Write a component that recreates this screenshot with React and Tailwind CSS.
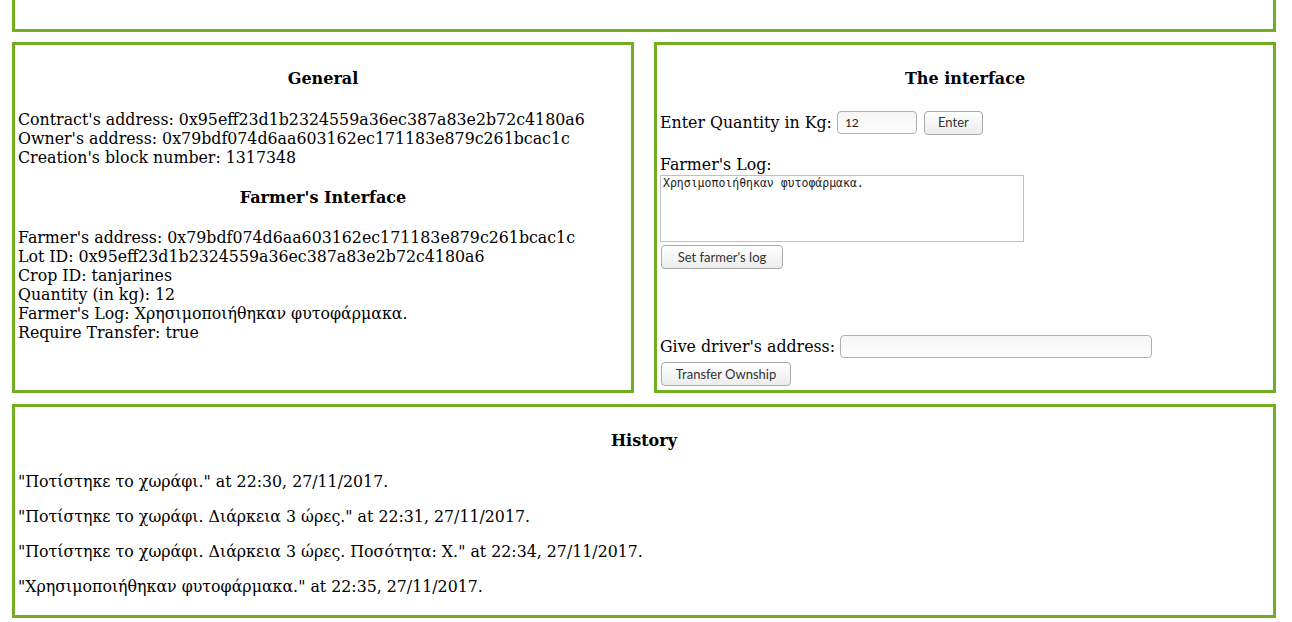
export default function App() {
  const box = "border-[3px] border-[#73ad21] p-[3px]";
  const btn =
    "h-[24px] px-0 whitespace-nowrap text-center rounded-[4px] border border-[#a9a9a9] bg-gradient-to-b from-white to-[#ececec] text-[13px] text-[#333] font-['Lato',sans-serif] leading-none";
  const input =
    "h-[23px] rounded-[4px] border border-[#b0b0b0] bg-gradient-to-b from-[#f4f4f4] to-white px-[7px] text-[12px] text-[#222] font-['Lato',sans-serif] outline-none";
  const h = "text-center text-[16px] font-bold leading-[19px]";
  return (
    <div className="w-[1292px] h-[622px] overflow-hidden bg-white pl-[12px] pr-[16px] font-['DejaVu_Serif',serif] text-[15.8px] leading-[19px] text-black">
      <div className="h-[32px] border-x-[3px] border-b-[3px] border-[#73ad21]" />
      <div className="mt-[10px] flex gap-[20px] h-[351px]">
        <div className={`flex-1 ${box}`}>
          <h4 className={`mt-[20.5px] mb-[22px] ${h}`}>General</h4>
          <div>Contract's address: 0x95eff23d1b2324559a36ec387a83e2b72c4180a6</div>
          <div>Owner's address: 0x79bdf074d6aa603162ec171183e879c261bcac1c</div>
          <div>Creation's block number: 1317348</div>
          <h4 className={`mt-[21px] mb-[21px] ${h}`}>Farmer's Interface</h4>
          <div>Farmer's address: 0x79bdf074d6aa603162ec171183e879c261bcac1c</div>
          <div>Lot ID: 0x95eff23d1b2324559a36ec387a83e2b72c4180a6</div>
          <div>Crop ID: tanjarines</div>
          <div>Quantity (in kg): 12</div>
          <div>Farmer's Log: Χρησιμοποιήθηκαν φυτοφάρμακα.</div>
          <div>Require Transfer: true</div>
        </div>
        <div className={`flex-1 ${box}`}>
          <h4 className={`mt-[20.5px] mb-[20px] ${h}`}>The interface</h4>
          <div className="flex items-center h-[30px]">
            <span>Enter Quantity in Kg:</span>
            <input className={`${input} ml-[5px] w-[80px]`} defaultValue="12" />
            <button className={`${btn} ml-[7px] w-[59px] h-[23px]`}>Enter</button>
          </div>
          <div className="mt-[17px]">Farmer's Log:</div>
          <textarea
            className="block mt-[1.5px] w-[364px] h-[67px] border border-[#c0c0c0] px-[2px] py-[1px] text-[11.5px] leading-[13px] text-[#222] font-['DejaVu_Sans_Mono',monospace] resize-none outline-none"
            defaultValue="Χρησιμοποιήθηκαν φυτοφάρμακα."
          />
          <button className={`${btn} block mt-[3px] ml-px w-[122px]`}>Set farmer's log</button>
          <div className="flex items-center h-[25px] mt-[65px]">
            <span>Give driver's address:</span>
            <input className={`${input} ml-[5px] w-[312px]`} />
          </div>
          <button className={`${btn} block mt-[3px] ml-px w-[130px] h-[23px]`}>Transfer Ownship</button>
        </div>
      </div>
      <div className={`mt-[11px] ${box}`}>
        <h4 className={`mt-[20.5px] mb-[22px] ${h}`}>History</h4>
        <p className="mb-[16px]">"Ποτίστηκε το χωράφι." at 22:30, 27/11/2017.</p>
        <p className="mb-[16px]">"Ποτίστηκε το χωράφι. Διάρκεια 3 ώρες." at 22:31, 27/11/2017.</p>
        <p className="mb-[16px]">"Ποτίστηκε το χωράφι. Διάρκεια 3 ώρες. Ποσότητα: Χ." at 22:34, 27/11/2017.</p>
        <p className="mb-[16px]">"Χρησιμοποιήθηκαν φυτοφάρμακα." at 22:35, 27/11/2017.</p>
      </div>
    </div>
  );
}
